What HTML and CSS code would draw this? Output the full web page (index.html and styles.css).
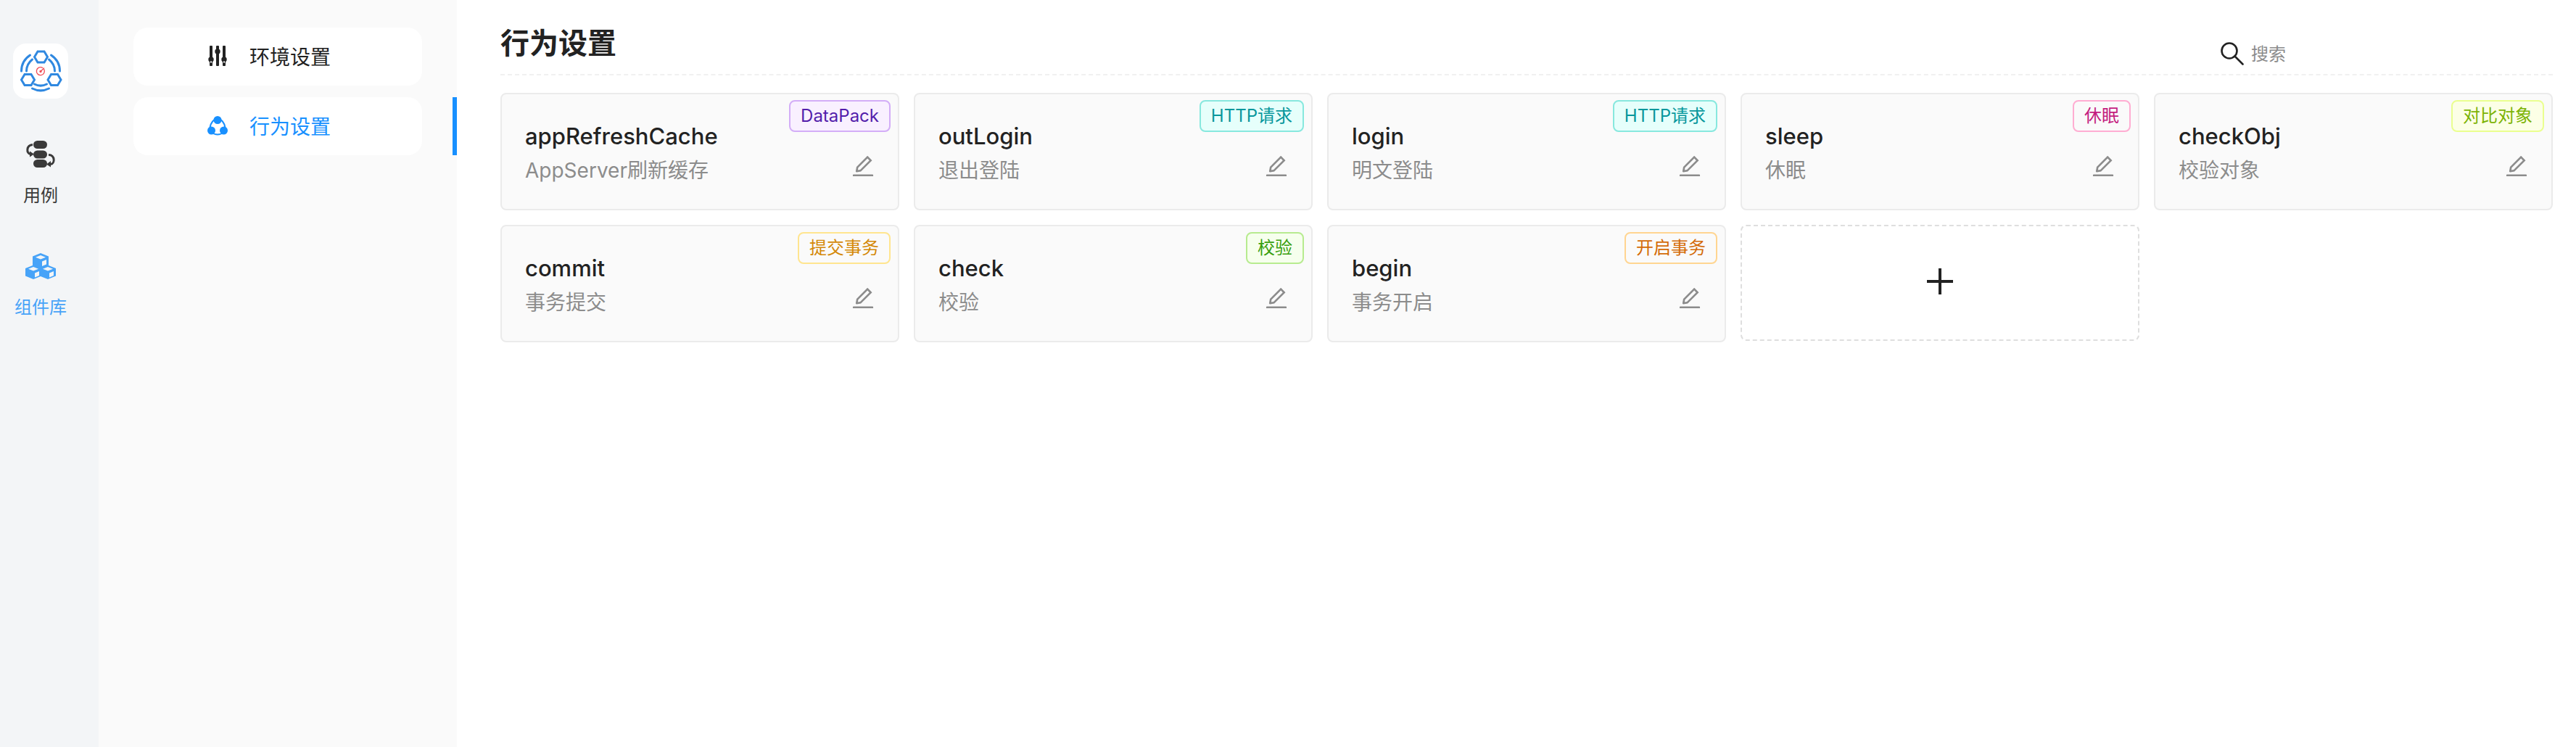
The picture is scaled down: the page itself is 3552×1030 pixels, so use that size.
FILE: index.html
```
<!DOCTYPE html>
<html lang="zh-CN">
<head>
  <meta charset="UTF-8">
  <title>行为设置</title>
  <meta name="viewport" content="width=device-width, initial-scale=1.0">
  <link rel="stylesheet" href="styles.css">
</head>
<body>

  <!-- Shared icons -->
  <svg class="sprite" aria-hidden="true">
    <symbol id="icon-edit" viewBox="0 0 1024 1024">
      <path d="M257.7 752c2 0 4-.2 6-.5L431.9 722c2-.4 3.9-1.3 5.3-2.8l423.9-423.9a9.96 9.96 0 000-14.1L694.9 114.9c-1.9-1.9-4.4-2.9-7.1-2.9s-5.2 1-7.1 2.9L256.8 538.8c-1.5 1.5-2.4 3.3-2.8 5.3l-29.5 168.2a33.5 33.5 0 009.4 29.8c6.6 6.4 14.9 9.9 23.8 9.9zm67.4-174.4L687.8 215l73.3 73.3-362.7 362.6-88.9 15.7 15.6-89zM880 836H144c-17.7 0-32 14.3-32 32v36c0 4.4 3.6 8 8 8h784c4.4 0 8-3.6 8-8v-36c0-17.7-14.3-32-32-32z"/>
    </symbol>
  </svg>

  <div class="layout">
    <!-- Main navigation -->
    <nav class="rail">
      <a class="logo" href="#" aria-label="首页">
        <svg viewBox="0 0 76 76" fill="none" stroke="#2f88e0" stroke-width="3">
          <path d="M29.500 18.500l4.500-7.500h9l4.500 7.500-4.500 7.500h-9z"/>
          <path d="M11.500 50l4.500-7.500h9l4.500 7.500-4.500 7.500h-9z"/>
          <path d="M48 50l4.500-7.500h9l4.500 7.500-4.500 7.500h-9z"/>
          <g stroke-linecap="round">
            <path d="M11.500 38c0-9 4.500-17 12-22M18.500 38c0-6 3-12 8-16"/>
            <path d="M64.500 38c0-9-4.500-17-12-22M57.500 38c0-6-3-12-8-16"/>
            <path d="M29.500 56c6 3 11 3 17 0M26.500 62c8 4 15 4 23 0"/>
          </g>
          <g stroke="#f0505a" stroke-width="1.400" stroke-linecap="round">
            <path d="M40.500 33.300a5.500 5.500 0 1 0 2.300 2.400M38 38.500l4.500-4.500"/>
            <circle cx="38" cy="38.500" r="1" fill="#f0505a"/>
          </g>
        </svg>
      </a>
      <a class="rail-item" href="#">
        <svg viewBox="0 0 44 44" fill="currentColor">
          <rect x="12" y="3" width="19" height="11" rx="5.500"/>
          <rect x="12" y="16.500" width="19" height="11" rx="5.500"/>
          <rect x="12" y="29" width="19" height="11" rx="5.500"/>
          <g fill="none" stroke="currentColor" stroke-width="3">
            <path d="M11 8.500C2 9 2 21 8 21.500"/>
            <path d="M33 22.500c9 0 9 12 3 13"/>
          </g>
          <path d="M7 17.500l6 4-6 4zM36 31l-6 4.500 6 4z"/>
        </svg>
        <span>用例</span>
      </a>
      <a class="rail-item active" href="#">
        <svg viewBox="0 0 44 44" fill="currentColor">
          <path fill-rule="evenodd" d="M22 4l11 4.500v12.500l10 4v10.500L32 40l-10-4-10 4L1 35.500V25l10-4V8.500zM22 7l-7 2.800 7 2.700 7-2.700zM24 15.500v6.500l6-2.500v-6.500zM12 23l-7 2.800 7 2.700 7-2.700zM14 31.500v6l6-2.500v-6zM32 23l-7 2.800 7 2.700 7-2.700zM34 31.500v6l6-2.500v-6z"/>
        </svg>
        <span>组件库</span>
      </a>
    </nav>

    <!-- Settings menu -->
    <aside class="menu">
      <a class="menu-item" href="#">
        <span class="menu-label">
          <svg viewBox="0 0 32 32" fill="currentColor">
            <rect x="5" y="2" width="4" height="28" rx="1"/>
            <rect x="14" y="2" width="4" height="28" rx="1"/>
            <rect x="23" y="2" width="4" height="28" rx="1"/>
            <circle cx="7" cy="21" r="3.700"/>
            <circle cx="16" cy="10" r="3.700"/>
            <circle cx="25" cy="21" r="3.700"/>
            <path d="M6 23.500h2v2H6zM24 23.500h2v2h-2z" fill="#fff"/>
          </svg>
          环境设置
        </span>
      </a>
      <a class="menu-item active" href="#">
        <span class="menu-label">
          <svg viewBox="0 0 32 32" fill="currentColor">
            <path d="M16 6c5 1 9.500 6 10.500 13 0 5-4 9.500-10.500 9.500S5.500 24 5.500 19C6.500 12 11 7 16 6z" fill="none" stroke="currentColor" stroke-width="2"/>
            <circle cx="16" cy="8.500" r="5.500"/>
            <circle cx="7.500" cy="23" r="5.500"/>
            <circle cx="24.500" cy="23" r="5.500"/>
          </svg>
          行为设置
        </span>
      </a>
    </aside>

    <main class="content">
      <header class="header">
        <h1>行为设置</h1>
        <label class="search">
          <svg viewBox="0 0 32 32" fill="none" stroke="#222" stroke-width="2.600" stroke-linecap="round">
            <circle cx="12" cy="12" r="10.500"/>
            <path d="M19.500 19.500l11 11"/>
          </svg>
          <input type="text" placeholder="搜索" aria-label="搜索">
        </label>
      </header>

      <div class="cards">
        <section class="card">
          <span class="tag purple">DataPack</span>
          <h2>appRefreshCache</h2>
          <p>AppServer刷新缓存</p>
          <button class="edit" aria-label="编辑"><svg><use href="#icon-edit"/></svg></button>
        </section>
        <section class="card">
          <span class="tag cyan">HTTP请求</span>
          <h2>outLogin</h2>
          <p>退出登陆</p>
          <button class="edit" aria-label="编辑"><svg><use href="#icon-edit"/></svg></button>
        </section>
        <section class="card">
          <span class="tag cyan">HTTP请求</span>
          <h2>login</h2>
          <p>明文登陆</p>
          <button class="edit" aria-label="编辑"><svg><use href="#icon-edit"/></svg></button>
        </section>
        <section class="card">
          <span class="tag magenta">休眠</span>
          <h2>sleep</h2>
          <p>休眠</p>
          <button class="edit" aria-label="编辑"><svg><use href="#icon-edit"/></svg></button>
        </section>
        <section class="card">
          <span class="tag lime">对比对象</span>
          <h2>checkObj</h2>
          <p>校验对象</p>
          <button class="edit" aria-label="编辑"><svg><use href="#icon-edit"/></svg></button>
        </section>
        <section class="card">
          <span class="tag gold">提交事务</span>
          <h2>commit</h2>
          <p>事务提交</p>
          <button class="edit" aria-label="编辑"><svg><use href="#icon-edit"/></svg></button>
        </section>
        <section class="card">
          <span class="tag green">校验</span>
          <h2>check</h2>
          <p>校验</p>
          <button class="edit" aria-label="编辑"><svg><use href="#icon-edit"/></svg></button>
        </section>
        <section class="card">
          <span class="tag orange">开启事务</span>
          <h2>begin</h2>
          <p>事务开启</p>
          <button class="edit" aria-label="编辑"><svg><use href="#icon-edit"/></svg></button>
        </section>
        <button class="add" aria-label="新增">
          <svg viewBox="0 0 36 36" fill="#222"><path d="M16 0h4v16h16v4H20v16h-4V20H0v-4h16z"/></svg>
        </button>
      </div>
    </main>
  </div>

</body>
</html>
```
FILE: styles.css
```
* {
  box-sizing: border-box;
}

body {
  margin: 0;
  font-family: Inter, "Noto Sans CJK SC", sans-serif;
  font-size: 28px;
  color: #222;
  background-color: #fff;
}

h1, h2, p {
  margin: 0;
}

a {
  color: inherit;
  text-decoration: none;
}

button {
  padding: 0;
  border: none;
  background: none;
  cursor: pointer;
}

svg {
  display: block;
}

.sprite {
  display: none;
}

.layout {
  display: flex;
  min-height: 100vh;
}

/* Main navigation */
.rail {
  display: flex;
  flex-direction: column;
  align-items: center;
  flex: none;
  width: 136px;
  padding: 60px 24px 0 0;
  background-color: #f3f5f7;
}

.logo {
  width: 76px;
  height: 76px;
  margin-bottom: 55px;
  border-radius: 18px;
  background-color: #fff;
}

.rail-item {
  display: flex;
  flex-direction: column;
  align-items: center;
  gap: 17px;
  height: 154px;
  font-size: 24px;
  line-height: 36px;
  color: #3a3a3a;
}

.rail-item svg {
  width: 44px;
  height: 44px;
}

.rail-item.active {
  color: #47a3f8;
}

/* Settings menu */
.menu {
  display: flex;
  flex-direction: column;
  gap: 16px;
  flex: none;
  width: 494px;
  padding-top: 38px;
  background-color: #fafafa;
}

.menu-item {
  padding: 0 48px;
}

.menu-item.active {
  padding-right: 42px;
  border-right: 6px solid #1890ff;
  color: #1890ff;
}

.menu-label {
  display: flex;
  align-items: center;
  gap: 28px;
  height: 80px;
  padding: 0 0 2px 100px;
  border-radius: 20px;
  background-color: #fff;
}

.menu-label svg {
  width: 32px;
  height: 32px;
}

/* Content */
.content {
  flex: 1;
  min-width: 0;
  padding: 0 32px 0 60px;
}

.header {
  display: flex;
  align-items: flex-end;
  justify-content: space-between;
  height: 104px;
  margin-bottom: 24px;
  border-bottom: 2px dashed #f0f0f0;
}

.header h1 {
  padding-bottom: 12px;
  font-size: 40px;
  font-weight: 600;
  line-height: 60px;
}

.search {
  display: flex;
  align-items: center;
  gap: 10px;
  width: 458px;
  padding-bottom: 10px;
}

.search svg {
  width: 32px;
  height: 32px;
}

.search input {
  flex: 1;
  min-width: 0;
  height: 36px;
  padding: 0;
  border: none;
  outline: none;
  font: inherit;
  font-size: 24px;
  background: none;
}

.search input::placeholder {
  color: #8c8c8c;
}

.cards {
  display: grid;
  grid-template-columns: repeat(5, 1fr);
  gap: 20px;
}

.card {
  position: relative;
  height: 162px;
  padding: 34px 32px;
  border: 2px solid #ebebeb;
  border-radius: 8px;
  background-color: #fafafa;
}

.card h2 {
  font-size: 31px;
  font-weight: 500;
  line-height: 48px;
}

.card p {
  line-height: 46px;
  color: #8c8c8c;
}

.tag {
  position: absolute;
  top: 8px;
  right: 10px;
  padding: 0 14px;
  border: 2px solid;
  border-radius: 8px;
  font-size: 24px;
  line-height: 40px;
}

.purple {
  color: #531dab;
  background-color: #f9f0ff;
  border-color: #d3adf7;
}

.cyan {
  color: #08979c;
  background-color: #e6fffb;
  border-color: #87e8de;
}

.magenta {
  color: #c41d7f;
  border-color: #ffadd2;
}

.lime {
  color: #7cb305;
  background-color: #fcffe6;
  border-color: #eaff8f;
}

.gold {
  color: #d48806;
  border-color: #ffe58f;
}

.green {
  color: #389e0d;
  background-color: #f6ffed;
  border-color: #b7eb8f;
}

.orange {
  color: #d46b08;
  border-color: #ffd591;
}

.edit {
  position: absolute;
  right: 30px;
  bottom: 41px;
}

.edit svg {
  width: 36px;
  height: 36px;
  fill: #8c8c8c;
}

.add {
  display: flex;
  align-items: center;
  justify-content: center;
  height: 160px;
  padding-bottom: 4px;
  border: 2px dashed #dedede;
  border-radius: 8px;
}

.add svg {
  width: 36px;
  height: 36px;
}
```
